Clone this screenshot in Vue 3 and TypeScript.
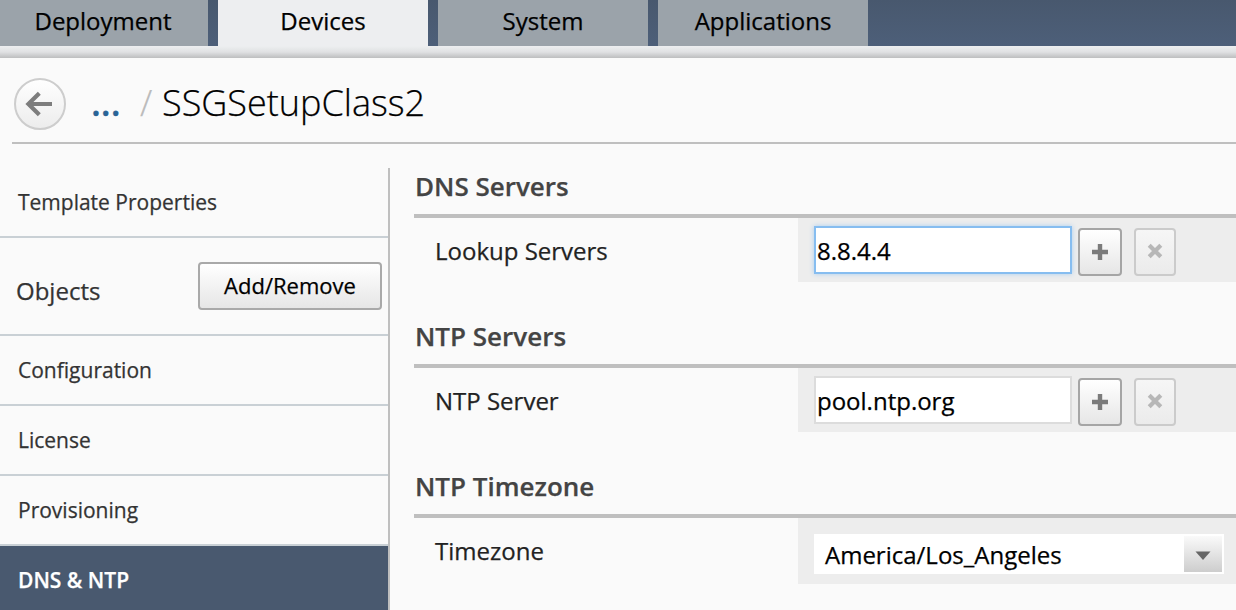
<script setup lang="ts">
import { ref } from 'vue'

interface ServerSection {
  title: string
  label: string
  value: string
  focused: boolean
}

const tabs = ['Deployment', 'Devices', 'System', 'Applications']
const activeTab = ref('Devices')

const objectItems = ['Configuration', 'License', 'Provisioning', 'DNS & NTP']
const activeItem = ref('DNS & NTP')

const sections = ref<ServerSection[]>([
  { title: 'DNS Servers', label: 'Lookup Servers', value: '8.8.4.4', focused: true },
  { title: 'NTP Servers', label: 'NTP Server', value: 'pool.ntp.org', focused: false },
])
</script>

<template>
  <div class="page">
    <nav class="tabs">
      <button
        v-for="tab in tabs"
        :key="tab"
        class="tab"
        :class="{ active: tab === activeTab }"
        @click="activeTab = tab"
      ><span>{{ tab }}</span></button>
    </nav>
    <div class="tab-shadow"></div>

    <header class="crumbs">
      <button class="back" aria-label="Back">
        <svg width="54" height="54" viewBox="0 0 54 54">
          <defs>
            <linearGradient id="backFill" x1="0" y1="0" x2="0" y2="1">
              <stop offset="0" stop-color="#ffffff" />
              <stop offset="1" stop-color="#ececec" />
            </linearGradient>
          </defs>
          <circle cx="27" cy="27" r="25" fill="url(#backFill)" stroke="#cdcdcd" stroke-width="2" />
          <path d="M39 27H16M26.3 16.2L15.4 27l10.9 10.8" fill="none" stroke="#7d7d7d" stroke-width="4.2" />
        </svg>
      </button>
      <a class="dots">...</a>
      <span class="slash">/</span>
      <h1 class="title">SSGSetupClass2</h1>
    </header>

    <div class="body">
      <aside class="side">
        <div class="item"><span>Template Properties</span></div>
        <div class="objects">
          <span class="objects-label">Objects</span>
          <button class="add-remove"><span>Add/Remove</span></button>
        </div>
        <div
          v-for="item in objectItems"
          :key="item"
          class="item"
          :class="{ selected: item === activeItem }"
          @click="activeItem = item"
        ><span>{{ item }}</span></div>
      </aside>

      <main class="main">
        <section v-for="s in sections" :key="s.title" class="section">
          <h2><span>{{ s.title }}</span></h2>
          <div class="row">
            <label><span>{{ s.label }}</span></label>
            <div class="field">
              <input v-model="s.value" type="text" :class="{ focused: s.focused }" />
              <button class="square plus" aria-label="Add">
                <svg width="40" height="44" viewBox="0 0 40 44">
                  <path d="M20 14v16M12 22h16" stroke="#7b7b7b" stroke-width="4.4" fill="none" />
                </svg>
              </button>
              <button class="square remove" aria-label="Remove">
                <svg width="38" height="44" viewBox="0 0 38 44">
                  <path d="M13.2 15.2l11.6 11.6M24.8 15.2L13.2 26.8" stroke="#b7b7b7" stroke-width="4.2" fill="none" />
                </svg>
              </button>
            </div>
          </div>
        </section>

        <section class="section">
          <h2><span>NTP Timezone</span></h2>
          <div class="row">
            <label><span>Timezone</span></label>
            <div class="field zone">
              <div class="select">
                <span class="select-value">America/Los_Angeles</span>
                <span class="select-arrow">
                  <svg width="38" height="36" viewBox="0 0 38 36">
                    <path d="M11.5 15.5h15L19 24z" fill="#666" />
                  </svg>
                </span>
              </div>
            </div>
          </div>
        </section>
      </main>
    </div>
  </div>
</template>

<style>
html,
body {
  margin: 0;
  overflow: hidden;
  background: #fafafa;
}
</style>

<style scoped>
.page {
  width: 1236px;
  height: 610px;
  overflow: hidden;
  display: flex;
  flex-direction: column;
  background: #fafafa;
  font-family: 'Open Sans', 'Noto Sans', sans-serif;
  font-size: 24px;
  color: #000;
  -webkit-text-stroke: 0.25px currentColor;
}

button {
  box-sizing: border-box;
  margin: 0;
  padding: 0;
  border: 0;
  font: inherit;
  color: inherit;
  background: none;
}

svg {
  display: block;
}

.tabs {
  flex: none;
  display: flex;
  gap: 10px;
  height: 46px;
  background: linear-gradient(#48586e, #4d5f79);
}

.tab {
  width: 210px;
  height: 46px;
  padding-bottom: 4px;
  line-height: 42px;
  background: #9ba3aa;
}

.tab:first-child {
  width: 208px;
  padding-right: 2px;
}

.tab.active {
  background: #edeef0;
}

.tab-shadow {
  flex: none;
  height: 12px;
  background: linear-gradient(#edeff0, #e0e1e3 50%, #bdbebf);
}

.crumbs {
  flex: none;
  box-sizing: border-box;
  display: flex;
  height: 86px;
  margin-left: 12px;
  border-bottom: 2px solid #bfbfbf;
}

.back {
  width: 54px;
  height: 54px;
  margin: 19px 0 0 1px;
}

.dots,
.slash,
.title {
  margin: 0;
  font-size: 36px;
  line-height: 90px;
  font-weight: 300;
}

.dots {
  width: 49px;
  margin-left: 24px;
  color: #2a6496;
  font-weight: 600;
}

.slash {
  width: 22px;
  color: #bbb;
}

.body {
  flex: 1;
  display: flex;
  padding-top: 24px;
}

.side {
  flex: none;
  width: 388px;
  border-right: 2px solid #bfbfbf;
  color: #333;
}

.item {
  height: 68px;
  padding-left: 18px;
  border-bottom: 2px solid #c9d0d5;
  font-size: 21px;
  line-height: 68px;
}

.item.selected {
  color: #fff;
  background: #49596f;
  font-weight: 600;
}

.objects {
  display: flex;
  justify-content: space-between;
  height: 96px;
  padding: 0 6px 0 16px;
  border-bottom: 2px solid #c9d0d5;
}

.objects-label {
  line-height: 106px;
}

.add-remove {
  width: 184px;
  height: 48px;
  margin-top: 24px;
  padding-bottom: 2px;
  border: 2px solid #a9a9a9;
  border-radius: 4px;
  background: linear-gradient(#fff, #e6e6e6);
  color: #000;
  font-size: 22px;
  line-height: 42px;
}

.main {
  flex: 1;
  margin-left: 24px;
}

.section {
  height: 150px;
}

h2 {
  box-sizing: border-box;
  height: 50px;
  margin: 0;
  padding-left: 1px;
  border-bottom: 4px solid #bfbfbf;
  color: #444;
  font-size: 26px;
  font-weight: 600;
  line-height: 36px;
}

.row {
  display: flex;
}

label {
  width: 363px;
  padding-left: 21px;
  line-height: 66px;
  color: #222;
}

.field {
  flex: 1;
  box-sizing: border-box;
  display: flex;
  height: 64px;
  padding: 8px 0 0 16px;
  background: #ededed;
}

.field.zone {
  height: 66px;
  padding-top: 16px;
}

input {
  box-sizing: border-box;
  width: 258px;
  height: 48px;
  margin: 0;
  padding: 0 1px;
  border: 2px solid #dcdcdc;
  outline: none;
  background: #fff;
  color: #000;
  font: inherit;
}

input.focused {
  border-color: #86bdf0;
  box-shadow: 0 0 5px #a9cdef;
}

.square {
  height: 48px;
  margin-top: 2px;
  border: 2px solid #a5a5a5;
  border-radius: 4px;
  background: linear-gradient(#fff, #e6e6e6);
}

.plus {
  width: 44px;
  margin-left: 6px;
}

.remove {
  width: 42px;
  margin-left: 12px;
  border-color: #cbcbcb;
  background: linear-gradient(#f6f6f6, #ebebeb);
}

.select {
  box-sizing: border-box;
  display: flex;
  justify-content: space-between;
  width: 410px;
  height: 40px;
  padding: 2px 2px 2px 11px;
  background: #fff;
}

.select-value {
  line-height: 38px;
}

.select-arrow {
  width: 38px;
  height: 36px;
  background: linear-gradient(#fafafa, #cdcdcd);
}
</style>
